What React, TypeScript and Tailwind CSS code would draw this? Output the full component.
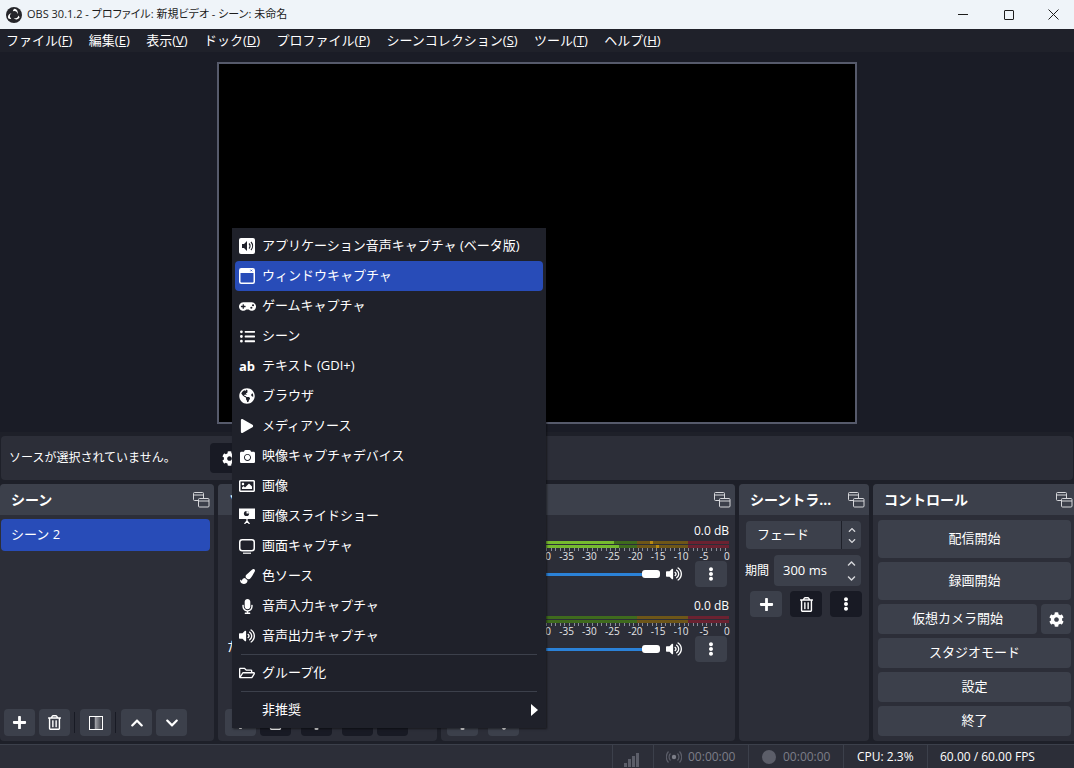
import type { ReactNode } from "react";
import {
  FaCamera,
  FaChevronDown,
  FaChevronUp,
  FaCog,
  FaEllipsisV,
  FaGamepad,
  FaGlobeAmericas,
  FaListUl,
  FaMicrophone,
  FaPaintBrush,
  FaPlay,
  FaPlus,
  FaRegFolderOpen,
  FaRegImage,
  FaRegTrashAlt,
  FaVolumeUp,
} from "react-icons/fa";

const font = "font-['Open_Sans','Noto_Sans_CJK_JP',sans-serif]";

const menus = [
  ["ファイル", "F"],
  ["編集", "E"],
  ["表示", "V"],
  ["ドック", "D"],
  ["プロファイル", "P"],
  ["シーンコレクション", "S"],
  ["ツール", "T"],
  ["ヘルプ", "H"],
];

const FloatIcon = () => (
  <svg width="17" height="16" viewBox="0 0 17 16" fill="none" stroke="#d5d6da" strokeWidth="1">
    <rect x="0.5" y="0.5" width="10" height="8" rx="1" />
    <path d="M0.5 3h10" />
    <rect x="5.5" y="6.5" width="10.5" height="8.5" rx="1" fill="#3c404b" />
    <path d="M5.5 9h10.5" />
  </svg>
);

const ObsLogo = () => (
  <svg width="16" height="16" viewBox="0 0 16 16">
    <circle cx="8" cy="8" r="8" fill="#26262b" />
    <path d="M8.4 1.8a3.6 3.6 0 0 1 2.9 5.4 3 3 0 0 0-3.2-3.3 3 3 0 0 0-1.3.4 3.6 3.6 0 0 1 1.6-2.5z" fill="#fff" />
    <path d="M13.6 10.6a3.6 3.6 0 0 1-6.1.2 3 3 0 0 0 4.4-1.1 3 3 0 0 0 .4-1.3 3.6 3.6 0 0 1 1.3 2.2z" fill="#fff" />
    <path d="M2.4 11.5a3.6 3.6 0 0 1 3.2-5.2 3 3 0 0 0-1.2 4.4 3 3 0 0 0 .9 1 3.6 3.6 0 0 1-2.9-.2z" fill="#fff" />
  </svg>
);

const AppAudioIcon = () => (
  <svg width="16" height="16" viewBox="0 0 16 16">
    <rect width="16" height="16" rx="2" fill="#fff" />
    <path d="M3 6h2l3-3v10l-3-3H3z" fill="#1f212a" />
    <path d="M10 5.5a3.5 3.5 0 0 1 0 5M12 4a6 6 0 0 1 0 8" stroke="#1f212a" strokeWidth="1.2" fill="none" />
  </svg>
);

const WindowIcon = () => (
  <svg width="16" height="16" viewBox="0 0 16 16">
    <rect x="0.75" y="0.75" width="14.5" height="14.5" rx="1.5" fill="none" stroke="#fff" strokeWidth="1.5" />
    <rect x="1" y="1" width="14" height="4" fill="#fff" />
    <path d="M11.5 1.7l1.6 1.6M13.1 1.7l-1.6 1.6" stroke="#2a4cb6" strokeWidth="0.8" />
  </svg>
);

const SlideshowIcon = () => (
  <svg width="16" height="16" viewBox="0 0 16 16">
    <rect y="0.5" width="16" height="10.5" fill="#fff" />
    <circle cx="7.5" cy="5.5" r="2.6" fill="#1f212a" />
    <path d="M7.5 5.5V3a2.5 2.5 0 0 1 2.5 2.5z" fill="#fff" />
    <path d="M8 11v2M8 13l-2.5 3M8 13l2.5 3" stroke="#fff" strokeWidth="1.2" />
  </svg>
);

const MonitorIcon = () => (
  <svg width="16" height="15" viewBox="0 0 16 15" fill="none" stroke="#fff">
    <rect x="0.75" y="0.75" width="14.5" height="11" rx="2.5" strokeWidth="1.5" />
    <path d="M4 14.2h8" strokeWidth="1.2" />
  </svg>
);

const FilterIcon = () => (
  <svg width="14" height="14" viewBox="0 0 14 14">
    <defs>
      <linearGradient id="fade">
        <stop offset="0.38" stopColor="#2f323d" />
        <stop offset="0.4" stopColor="#a9aab0" />
        <stop offset="1" stopColor="#33363f" />
      </linearGradient>
    </defs>
    <rect x="0.5" y="0.5" width="13" height="13" fill="url(#fade)" stroke="#fff" />
  </svg>
);

const BroadcastIcon = () => (
  <svg width="16" height="14" viewBox="0 0 16 14" fill="none" stroke="#5c5e69" strokeWidth="1.2">
    <circle cx="8" cy="7" r="2.2" fill="#7c7e88" stroke="none" />
    <path d="M4.5 3.5a5 5 0 0 0 0 7M11.5 3.5a5 5 0 0 1 0 7M2.5 1.5a8 8 0 0 0 0 11M13.5 1.5a8 8 0 0 1 0 11" />
  </svg>
);

function IconBtn({
  children,
  dark,
  className,
}: {
  children?: ReactNode;
  dark?: boolean;
  className?: string;
}) {
  return (
    <div
      className={`flex items-center justify-center rounded-[4px] text-white ${
        dark ? "bg-[#181a24]" : "bg-[#3c404b]"
      } ${className ?? "h-[27px] w-[31px]"}`}
    >
      {children}
    </div>
  );
}

function Dock({
  title,
  width,
  children,
}: {
  title: string;
  width: string;
  children: ReactNode;
}) {
  return (
    <section className={`flex shrink-0 flex-col overflow-hidden rounded-[4px] bg-[#2c2e38] ${width}`}>
      <div className="flex h-[31px] shrink-0 items-center justify-between bg-[#3c404b] pl-[11px] pr-[4px]">
        <span className="text-[14px] font-bold whitespace-nowrap text-white">{title}</span>
        <FloatIcon />
      </div>
      {children}
    </section>
  );
}

function MeterRow({ bright, peak }: { bright: number; peak?: number }) {
  return (
    <div className="relative flex h-[3px]">
      <div className="h-full bg-[#76b92f]" style={{ width: bright }} />
      <div className="h-full bg-[#3f6b1d]" style={{ width: 187 - bright }} />
      <div className="h-full w-[51px] bg-[#6e5618]" />
      <div className="h-full w-[41px] bg-[#6b2231]" />
      {peak !== undefined && <div className="absolute top-0 h-full w-[3px] bg-[#b98a12]" style={{ left: peak }} />}
    </div>
  );
}

const scale = ["-60", "-55", "-50", "-45", "-40", "-35", "-30", "-25", "-20", "-15", "-10", "-5", "0"];

function MixerStrip({ top, bottom, topPeak, bottomPeak }: { top: number; bottom: number; topPeak?: number; bottomPeak?: number }) {
  return (
    <div className="ml-[9px] mr-[6px] h-[75px]">
      <div className="h-[16px] text-right text-[12px] leading-[16px] text-white">0.0 dB</div>
      <div className="mt-[2px] flex flex-col gap-[1px]">
        <MeterRow bright={top} peak={topPeak} />
        <MeterRow bright={bottom} peak={bottomPeak} />
      </div>
      <div className="h-[3px] bg-[repeating-linear-gradient(90deg,#8b8d99_0,#8b8d99_1px,transparent_1px,transparent_4.58px)]" />
      <div className="-mx-[8px] flex h-[10px] justify-between text-[10px] leading-[10px] text-[#e4e5e8]">
        {scale.map((s) => (
          <span key={s} className="w-[20px] text-center">
            {s}
          </span>
        ))}
      </div>
      <div className="flex h-[26px] items-center">
        <div className="h-[3px] w-[192px] bg-[#2b82d8]" />
        <div className="h-[8px] w-[18px] rounded-[3px] bg-white" />
        <FaVolumeUp className="ml-[6px] text-white" size={16} />
        <IconBtn className="ml-[13px] h-[26px] w-[32px]">
          <FaEllipsisV size={14} />
        </IconBtn>
      </div>
    </div>
  );
}

const sourceItems: [ReactNode, string][] = [
  [<AppAudioIcon />, "アプリケーション音声キャプチャ (ベータ版)"],
  [<WindowIcon />, "ウィンドウキャプチャ"],
  [<FaGamepad size={17} />, "ゲームキャプチャ"],
  [<FaListUl size={15} />, "シーン"],
  [<span className="text-[13px] leading-none font-bold">ab</span>, "テキスト (GDI+)"],
  [<FaGlobeAmericas size={16} />, "ブラウザ"],
  [<FaPlay size={14} />, "メディアソース"],
  [<FaCamera size={15} />, "映像キャプチャデバイス"],
  [<FaRegImage size={16} />, "画像"],
  [<SlideshowIcon />, "画像スライドショー"],
  [<MonitorIcon />, "画面キャプチャ"],
  [<FaPaintBrush size={15} />, "色ソース"],
  [<FaMicrophone size={15} />, "音声入力キャプチャ"],
  [<FaVolumeUp size={16} />, "音声出力キャプチャ"],
];

function MenuItem({ icon, label, active, arrow }: { icon?: ReactNode; label: string; active?: boolean; arrow?: boolean }) {
  return (
    <div className={`mx-[3px] flex h-[30px] items-center rounded-[4px] text-[13px] text-white ${active ? "bg-[#284cb8]" : ""}`}>
      <span className="flex w-[24px] shrink-0 justify-center">{icon}</span>
      <span className="ml-[3px] whitespace-nowrap">{label}</span>
      {arrow && <span className="ml-auto mr-[5px] h-0 w-0 border-y-[6px] border-l-[7px] border-y-transparent border-l-white" />}
    </div>
  );
}

const MenuSep = () => <div className="mx-[9px] my-[3px] h-px bg-[#3c404b]" />;

export default function App() {
  return (
    <div className={`relative flex h-[768px] w-[1074px] flex-col overflow-hidden bg-[#1e2029] ${font}`}>
      {/* title bar */}
      <div className="flex h-[29px] shrink-0 items-center bg-[#eff4f9] pl-[6px] text-[11px] text-[#1c1c1c]">
        <ObsLogo />
        <span className="ml-[5px] [font-feature-settings:'palt']">OBS 30.1.2 - プロファイル: 新規ビデオ - シーン: 未命名</span>
        <div className="ml-auto flex h-full">
          <div className="flex w-[46px] items-center justify-center">
            <div className="h-px w-[10px] bg-[#1c1c1c]" />
          </div>
          <div className="flex w-[46px] items-center justify-center">
            <div className="h-[10px] w-[10px] rounded-[1px] border border-[#1c1c1c]" />
          </div>
          <div className="flex w-[42px] items-center justify-center">
            <svg width="11" height="11" viewBox="0 0 11 11" stroke="#1c1c1c">
              <path d="M0.5 0.5l10 10M10.5 0.5l-10 10" />
            </svg>
          </div>
        </div>
      </div>

      {/* menu bar */}
      <div className="flex h-[23px] shrink-0 items-center gap-[16.4px] bg-[#1f212a] pl-[6px] text-[13px] text-white">
        {menus.map(([name, key]) => (
          <span key={key} className="whitespace-nowrap">
            {name}(<span className="underline">{key}</span>)
          </span>
        ))}
      </div>

      {/* preview */}
      <div className="flex h-[380px] shrink-0 justify-center bg-[#1a1c26] pt-[10px]">
        <div className="h-[362px] w-[640px] border-2 border-[#565a6b] bg-black" />
      </div>

      {/* context bar */}
      <div className="mx-[1px] mt-[4px] flex h-[44px] shrink-0 items-center rounded-[4px] bg-[#2c2e38] pl-[8px] pr-[2px] text-[12px] text-white">
        <span className="w-[201px]">ソースが選択されていません。</span>
        <IconBtn dark className="h-[30px] w-[38px]">
          <FaCog size={15} />
        </IconBtn>
      </div>

      {/* docks */}
      <div className="mt-[4px] flex h-[257px] shrink-0 gap-[4px]">
        <Dock title="シーン" width="w-[214px]">
          <div className="mx-[1px] mt-[4px] flex h-[32px] w-[209px] items-center rounded-[4px] bg-[#284cb8] pl-[10px] text-[13px] text-white">
            シーン 2
          </div>
          <div className="mt-auto mb-[5px] flex items-center pl-[4px]">
            <IconBtn>
              <FaPlus size={15} />
            </IconBtn>
            <IconBtn className="ml-[4px] h-[27px] w-[31px]">
              <FaRegTrashAlt size={15} />
            </IconBtn>
            <div className="mx-[4px] h-[21px] w-px bg-[#181a24]" />
            <IconBtn className="ml-[1px] h-[27px] w-[31px]">
              <FilterIcon />
            </IconBtn>
            <div className="mx-[4px] h-[21px] w-px bg-[#181a24]" />
            <IconBtn className="ml-[1px] h-[27px] w-[31px]">
              <FaChevronUp size={14} />
            </IconBtn>
            <IconBtn className="ml-[4px] h-[27px] w-[31px]">
              <FaChevronDown size={14} />
            </IconBtn>
          </div>
        </Dock>

        <Dock title="ソース" width="w-[219px]">
          <div className="pl-[9px] pt-[122px] text-[13px] text-white">た</div>
          <div className="mt-auto mb-[5px] flex items-center pl-[7px]">
            <IconBtn>
              <FaPlus size={15} />
            </IconBtn>
            <IconBtn dark className="ml-[4px] h-[27px] w-[31px]">
              <FaRegTrashAlt size={15} />
            </IconBtn>
            <IconBtn dark className="ml-[10px] h-[27px] w-[31px]">
              <FaCog size={15} />
            </IconBtn>
            <IconBtn dark className="ml-[10px] h-[27px] w-[31px]">
              <FaChevronUp size={14} />
            </IconBtn>
            <IconBtn dark className="ml-[4px] h-[27px] w-[31px]">
              <FaChevronDown size={14} />
            </IconBtn>
          </div>
        </Dock>

        <Dock title="音声ミキサー" width="w-[294px]">
          <div className="pt-[8px]">
            <MixerStrip top={164} bottom={169} topPeak={200} bottomPeak={206} />
            <MixerStrip top={0} bottom={0} />
          </div>
          <div className="mt-auto mb-[5px] flex items-center gap-[10px] pl-[6px]">
            <IconBtn>
              <FaCog size={15} />
            </IconBtn>
            <IconBtn>
              <FaEllipsisV size={14} />
            </IconBtn>
          </div>
        </Dock>

        <Dock title="シーントラ..." width="w-[130px]">
          <div className="mx-[7px] mt-[6px] mr-[8px] flex h-[28px] items-center rounded-[4px] bg-[#3c404b] text-[13px] text-white">
            <span className="flex-1 pl-[11px]">フェード</span>
            <div className="flex h-full w-[20px] flex-col items-center justify-center border-l border-[#1e2029] text-[#d5d6da]">
              <FaChevronUp size={8} />
              <FaChevronDown className="mt-[3px]" size={8} />
            </div>
          </div>
          <div className="mt-[6px] flex items-center pl-[6px] pr-[8px] text-[12px] text-white">
            <span className="w-[29px]">期間</span>
            <div className="flex h-[31px] flex-1 items-center justify-between rounded-[4px] bg-[#3c404b] pl-[9px] pr-[5px] text-[13px]">
              <span>300 ms</span>
              <div className="flex flex-col gap-[6px] text-[#d5d6da]">
                <FaChevronUp size={9} />
                <FaChevronDown size={9} />
              </div>
            </div>
          </div>
          <div className="mt-[5px] flex gap-[8px] pl-[11px]">
            <IconBtn className="h-[26px] w-[32px]">
              <FaPlus size={15} />
            </IconBtn>
            <IconBtn dark className="h-[26px] w-[32px]">
              <FaRegTrashAlt size={15} />
            </IconBtn>
            <IconBtn dark className="h-[26px] w-[32px]">
              <FaEllipsisV size={14} />
            </IconBtn>
          </div>
        </Dock>

        <Dock title="コントロール" width="w-[204px]">
          <div className="flex flex-col gap-[4px] pl-[5px] pr-[6px] pt-[5px] text-[13px] text-white">
            <div className="flex h-[38px] items-center justify-center rounded-[4px] bg-[#3c404b]">配信開始</div>
            <div className="flex h-[38px] items-center justify-center rounded-[4px] bg-[#3c404b]">録画開始</div>
            <div className="flex h-[30px] gap-[4px]">
              <div className="flex flex-1 items-center justify-center rounded-[4px] bg-[#3c404b]">仮想カメラ開始</div>
              <IconBtn className="h-[30px] w-[30px]">
                <FaCog size={15} />
              </IconBtn>
            </div>
            <div className="flex h-[30px] items-center justify-center rounded-[4px] bg-[#3c404b]">スタジオモード</div>
            <div className="flex h-[30px] items-center justify-center rounded-[4px] bg-[#3c404b]">設定</div>
            <div className="flex h-[30px] items-center justify-center rounded-[4px] bg-[#3c404b]">終了</div>
          </div>
        </Dock>
      </div>

      {/* status bar */}
      <div className="mt-[3px] flex flex-1 items-center justify-end border-t border-[#3c404b] bg-[#2c2e38] text-[12px] text-white">
        <div className="flex h-full w-[41px] items-end justify-center gap-[1px] border-l border-[#3c404b] pb-[1px] pr-[4px]">
          <div className="h-[4px] w-[3px] bg-[#5c5e69]" />
          <div className="h-[8px] w-[3px] bg-[#5c5e69]" />
          <div className="h-[11px] w-[3px] bg-[#5c5e69]" />
          <div className="h-[14px] w-[3px] bg-[#5c5e69]" />
        </div>
        <div className="flex h-full w-[95px] items-center border-l border-[#3c404b] pl-[12px] text-[#7c7e88]">
          <BroadcastIcon />
          <span className="ml-[6px]">00:00:00</span>
        </div>
        <div className="flex h-full w-[95px] items-center border-l border-[#3c404b] pl-[13px] text-[#7c7e88]">
          <div className="h-[14px] w-[14px] rounded-full bg-[#5c5e69]" />
          <span className="ml-[7px]">00:00:00</span>
        </div>
        <div className="flex h-full w-[84px] items-center border-l border-[#3c404b] pl-[13px]">CPU: 2.3%</div>
        <div className="flex h-full w-[147px] items-center border-l border-[#3c404b] pl-[12px]">60.00 / 60.00 FPS</div>
      </div>

      {/* add source menu */}
      <div className="absolute top-[228px] left-[232px] w-[314px] bg-[#1f212a] py-[3px] shadow-[1px_1px_2px_rgba(0,0,0,0.5)]">
        {sourceItems.map(([icon, label], i) => (
          <MenuItem key={label} icon={icon} label={label} active={i === 1} />
        ))}
        <MenuSep />
        <MenuItem icon={<FaRegFolderOpen size={16} />} label="グループ化" />
        <MenuSep />
        <MenuItem label="非推奨" arrow />
      </div>
    </div>
  );
}
